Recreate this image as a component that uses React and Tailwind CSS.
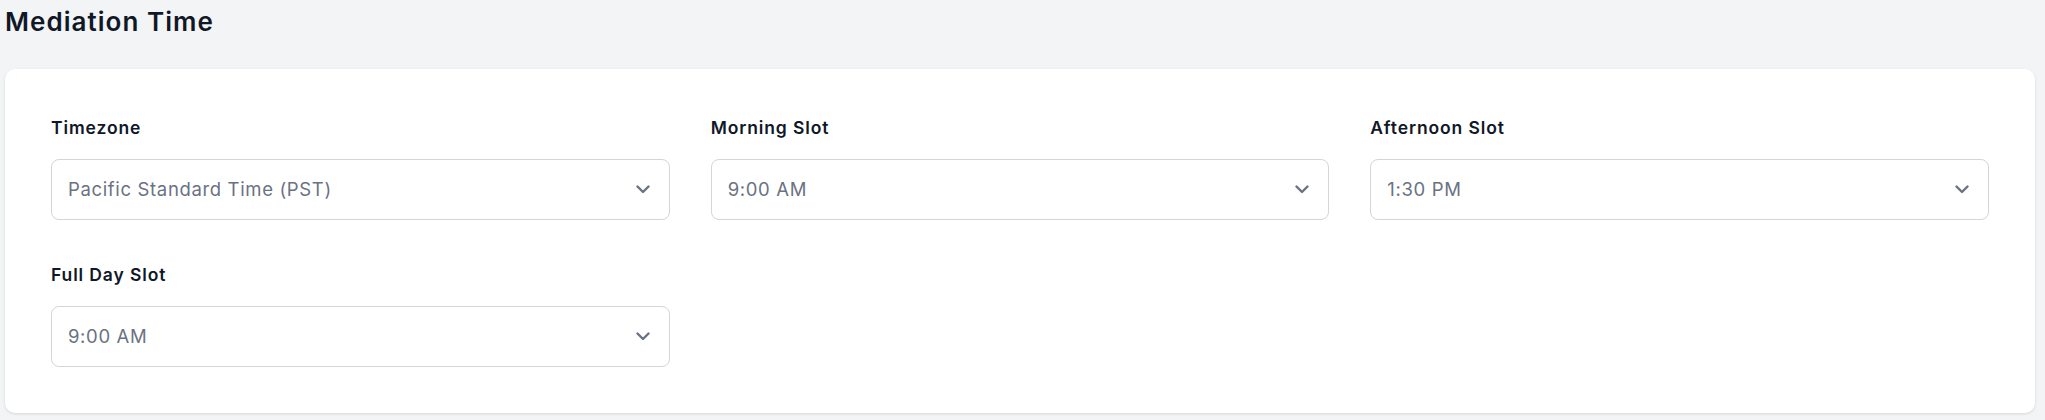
import React from "react";

const Chevron = () => (
    <svg width="14" height="9" viewBox="0 0 14 9" fill="none" className="shrink-0">
        <polyline points="1.5,1.5 7,7 12.5,1.5" stroke="#6b7280" strokeWidth="2.4"
                  strokeLinecap="round" strokeLinejoin="round"/>
    </svg>
);

const SelectField = ({label, value}) => (
    <div className="flex flex-col">
        <label
            className="text-[17.5px] leading-[24px] font-semibold tracking-[0.05em] text-gray-900 mb-[19px]">{label}</label>
        <div
            className="h-[61px] flex items-center justify-between pl-[16px] pr-[19px] bg-white border border-gray-300 rounded-[8px]">
            <span className="text-[18.5px] tracking-[0.035em] text-gray-500">{value}</span>
            <Chevron/>
        </div>
    </div>
);

const App = () => {
    const fields = [
        {label: "Timezone", value: "Pacific Standard Time (PST)"},
        {label: "Morning Slot", value: "9:00 AM"},
        {label: "Afternoon Slot", value: "1:30 PM"},
        {label: "Full Day Slot", value: "9:00 AM"},
    ];
    return (
        <div className="min-h-screen bg-gray-100 pl-[5px] pr-[10px] pt-[6px] font-['Inter',sans-serif]">
            <h2 className="text-[26px] leading-[32px] font-semibold tracking-[0.04em] text-gray-900">Mediation Time</h2>
            <div
                className="mt-[31px] bg-white rounded-[10px] shadow-[0_1px_3px_rgba(0,0,0,0.12)] pt-[47px] pb-[46px] px-[46px]">
                <div className="grid grid-cols-3 gap-x-[41px] gap-y-[43px]">
                    {fields.map(f => <SelectField key={f.label} {...f}/>)}
                </div>
            </div>
        </div>
    );
};

export default App;
